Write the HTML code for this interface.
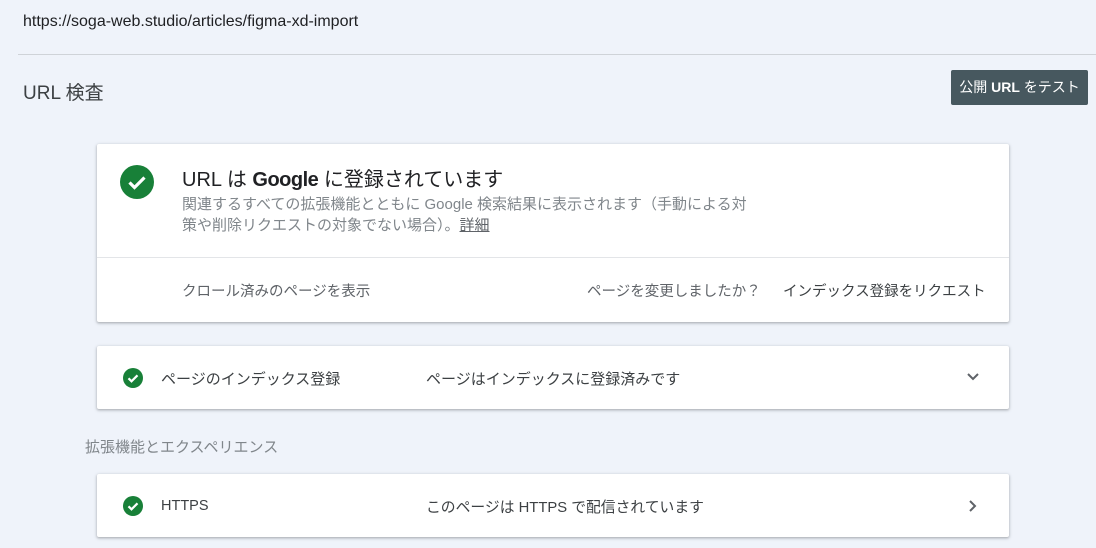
<!DOCTYPE html>
<html><head><meta charset="utf-8"><style>
*{margin:0;padding:0;box-sizing:border-box}
body{width:1096px;height:548px;overflow:hidden;background:#eff3fa;font-family:"Liberation Sans","Noto Sans CJK JP",sans-serif;color:#202124;position:relative}
.a{position:absolute;white-space:nowrap}
.card{position:absolute;left:97px;width:912px;background:#fff;border-radius:2px;box-shadow:0 1px 2px rgba(60,64,67,.3),0 1px 3px 1px rgba(60,64,67,.12)}
.g{color:#5f6368}
</style></head><body>
<div class="a" style="left:23px;top:13px;font-size:16px;color:#202124">https://soga-web.studio/articles/figma-xd-import</div>
<div class="a" style="left:18px;top:54px;width:1078px;height:1px;background:#cfd3d8"></div>
<div class="a" style="left:23px;top:78px;font-size:19px;color:#3c4043">URL 検査</div>
<div class="a" style="left:951px;top:70px;width:137px;height:35px;background:#47585f;border-radius:2px;color:#fff;font-size:14px;line-height:35px;text-align:center">公開 <b>URL</b> をテスト</div>

<div class="card" style="top:144px;height:178px">
<svg class="a" style="left:23px;top:21px" width="34" height="34" viewBox="0 0 34 34"><circle cx="17" cy="17" r="17" fill="#188038"/><path d="M9.5 17.5l5 5 10-10" stroke="#fff" stroke-width="3.2" fill="none"/></svg>
<div class="a" style="left:85px;top:19px;font-size:20px;color:#202124">URL は <span style="font-weight:bold;letter-spacing:-0.5px">Google</span> に登録されています</div>
<div class="a g" style="left:85px;top:50px;font-size:15px;line-height:21px;color:#80868b">関連するすべての拡張機能とともに Google 検索結果に表示されます（手動による対<br>策や削除リクエストの対象でない場合）。<span style="text-decoration:underline;color:#5f6368">詳細</span></div>
<div class="a" style="left:0;top:113px;width:912px;height:1px;background:#e3e5e8"></div>
<div class="a g" style="left:85px;top:136px;font-size:14.5px">クロール済みのページを表示</div>
<div class="a g" style="left:490px;top:136px;font-size:14.5px">ページを変更しましたか？</div>
<div class="a" style="left:686px;top:136px;font-size:14.5px;color:#3c4043">インデックス登録をリクエスト</div>
</div>

<div class="card" style="top:346px;height:63px">
<svg class="a" style="left:26px;top:22px" width="20" height="20" viewBox="0 0 20 20"><circle cx="10" cy="10" r="10" fill="#188038"/><path d="M5.5 10.3l3 3 6-6" stroke="#fff" stroke-width="2.2" fill="none"/></svg>
<div class="a" style="left:64px;top:22px;font-size:15px;color:#3c4043">ページのインデックス登録</div>
<div class="a" style="left:329px;top:22px;font-size:15px;color:#3c4043">ページはインデックスに登録済みです</div>
<svg class="a" style="left:869px;top:26px" width="14" height="10" viewBox="0 0 14 10"><path d="M2 2l5 5 5-5" stroke="#5f6368" stroke-width="2" fill="none"/></svg>
</div>

<div class="a" style="left:85px;top:436px;font-size:15px;color:#80868b">拡張機能とエクスペリエンス</div>

<div class="card" style="top:474px;height:63px">
<svg class="a" style="left:26px;top:22px" width="20" height="20" viewBox="0 0 20 20"><circle cx="10" cy="10" r="10" fill="#188038"/><path d="M5.5 10.3l3 3 6-6" stroke="#fff" stroke-width="2.2" fill="none"/></svg>
<div class="a" style="left:64px;top:24px;font-size:14.5px;color:#3c4043">HTTPS</div>
<div class="a" style="left:329px;top:22px;font-size:14.8px;color:#3c4043">このページは HTTPS で配信されています</div>
<svg class="a" style="left:871px;top:25px" width="10" height="14" viewBox="0 0 10 14"><path d="M2 2l5 5-5 5" stroke="#5f6368" stroke-width="2" fill="none"/></svg>
</div>
</body></html>
